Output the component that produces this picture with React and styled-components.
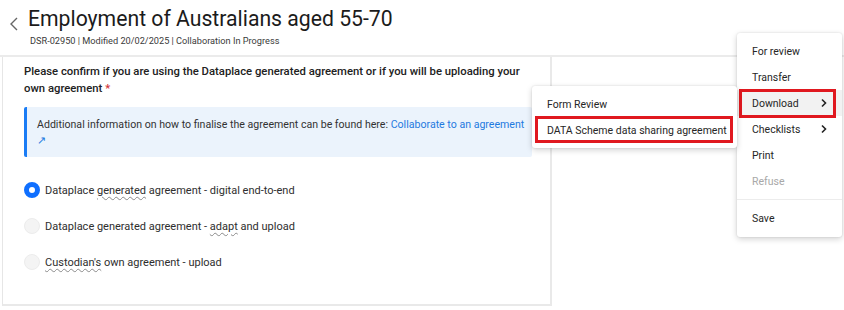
import React from "react";
import styled, { createGlobalStyle } from "styled-components";

const GlobalStyle = createGlobalStyle`
    html, body {
        margin: 0;
        padding: 0;
        background: #ffffff;
        width: 844px;
        height: 310px;
        overflow: hidden;
    }
    body {
        font-family: Roboto, "Open Sans", sans-serif;
        color: #242424;
    }
`;

const Page = styled.div`
    position: relative;
    width: 844px;
    height: 310px;
`;
const Header = styled.div`
    height: 57px;
    border-bottom: 2px solid #ebebeb;
    display: flex;
    align-items: flex-start;
    padding: 4px 0 0 6px;
    box-sizing: border-box;
`;
const BackBtn = styled.div`
    width: 16px;
    height: 28px;
    margin-top: 6px;
    display: flex;
    align-items: center;
    justify-content: center;
`;
const TitleBlock = styled.div`
    margin-left: 6px;
    display: flex;
    flex-direction: column;
`;
const Title = styled.h1`
    margin: 0;
    font-weight: 400;
    font-size: 21.2px;
    line-height: 30px;
    color: #1b1b1b;
`;
const Meta = styled.div`
    margin-left: 2px;
    font-size: 9.2px;
    line-height: 14px;
    color: #3a3a3a;
`;
const Body = styled.div`
    padding-left: 2px;
`;
const Card = styled.div`
    width: 550px;
    height: 249px;
    box-sizing: border-box;
    border-left: 1px solid #e6e6e6;
    border-right: 2px solid #e9e9e9;
    border-bottom: 2px solid #e9e9e9;
    padding: 6px 20px 0 21px;
`;
const Question = styled.p`
    margin: 0;
    font-size: 11.3px;
    font-weight: 500;
    line-height: 17px;
    color: #212121;
`;
const Required = styled.span`
    color: #d13438;
`;
const InfoBox = styled.div`
    margin-top: 10px;
    width: 508px;
    height: 50px;
    box-sizing: border-box;
    background: #ebf3fc;
    border-left: 3px solid #1a7cf5;
    border-radius: 2px;
    padding: 10px 0 0 10px;
    font-size: 10.6px;
    line-height: 16px;
    color: #323232;
`;
const Link = styled.a`
    color: #1f7ae0;
    text-decoration: none;
`;
const Options = styled.div`
    margin-top: 24px;
    display: flex;
    flex-direction: column;
    gap: 18px;
`;
const Option = styled.label`
    display: flex;
    align-items: center;
    height: 18px;
    font-size: 11px;
    color: #2e2e2e;
`;
const Radio = styled.span`
    width: 16px;
    height: 16px;
    border-radius: 50%;
    box-sizing: border-box;
    margin-right: 5px;
    background: ${p => (p.$checked ? "#ffffff" : "#f4f4f4")};
    border: ${p => (p.$checked ? "5px solid #0f6fff" : "1px solid #ececec")};
`;
const Spell = styled.span`
    text-decoration: underline wavy #8a8a8a;
    text-decoration-thickness: 1px;
    text-underline-offset: 2px;
`;
const Menu = styled.div`
    position: absolute;
    background: #ffffff;
    box-shadow: 0 2px 6px rgba(0, 0, 0, 0.18), 0 0 2px rgba(0, 0, 0, 0.12);
    border-radius: 3px;
    padding: 5px 0;
    box-sizing: border-box;
    display: flex;
    flex-direction: column;
`;
const MainMenu = styled(Menu)`
    left: 737px;
    top: 33px;
    width: 105px;
    height: 204px;
`;
const SubMenu = styled(Menu)`
    left: 532px;
    top: 86px;
    width: 205px;
    height: 62px;
`;
const Item = styled.div`
    position: relative;
    height: 26px;
    display: flex;
    align-items: center;
    justify-content: space-between;
    padding: 0 14px 0 15px;
    font-size: 10.5px;
    white-space: nowrap;
    color: ${p => (p.$disabled ? "#a8a8a8" : "#262626")};
    background: ${p => (p.$active ? "#f2f2f2" : "transparent")};
    box-sizing: border-box;
`;
const Highlight = styled.div`
    position: absolute;
    inset: ${p => p.$inset || "0"};
    border: 3px solid #e0181f;
    pointer-events: none;
`;
const Divider = styled.div`
    height: 1px;
    background: #ececec;
    margin: 5px 0 5px;
`;

function Chevron() {
    return (
        <svg width="8" height="10" viewBox="0 0 8 10">
            <path d="M2 1.5 L5.5 5 L2 8.5" fill="none" stroke="#222" strokeWidth="1.6" />
        </svg>
    );
}

export default function App() {
    return (
        <Page>
            <GlobalStyle />
            <Header>
                <BackBtn>
                    <svg width="10" height="16" viewBox="0 0 10 16">
                        <path d="M8 2 L2 8 L8 14" fill="none" stroke="#666" strokeWidth="1.4" />
                    </svg>
                </BackBtn>
                <TitleBlock>
                    <Title>Employment of Australians aged 55-70</Title>
                    <Meta>DSR-02950 | Modified 20/02/2025 | Collaboration In Progress</Meta>
                </TitleBlock>
            </Header>
            <Body>
                <Card>
                    <Question>
                        Please confirm if you are using the Dataplace generated agreement or if you will be uploading your
                        own agreement <Required>*</Required>
                    </Question>
                    <InfoBox>
                        Additional information on how to finalise the agreement can be found here:{" "}
                        <Link>Collaborate to an agreement ↗</Link>
                    </InfoBox>
                    <Options>
                        <Option>
                            <Radio $checked />
                            <span>Dataplace <Spell>generated</Spell> agreement - digital end-to-end</span>
                        </Option>
                        <Option>
                            <Radio />
                            <span>Dataplace generated agreement - <Spell>adapt</Spell> and upload</span>
                        </Option>
                        <Option>
                            <Radio />
                            <span><Spell>Custodian's</Spell> own agreement - upload</span>
                        </Option>
                    </Options>
                </Card>
            </Body>
            <MainMenu>
                <Item>For review</Item>
                <Item>Transfer</Item>
                <Item $active>
                    Download <Chevron />
                    <Highlight $inset="-1px 6px -2px 2px" />
                </Item>
                <Item>Checklists <Chevron /></Item>
                <Item>Print</Item>
                <Item $disabled>Refuse</Item>
                <Divider />
                <Item>Save</Item>
            </MainMenu>
            <SubMenu>
                <Item>Form Review</Item>
                <Item>
                    DATA Scheme data sharing agreement
                    <Highlight $inset="-1px 4px 0 3px" />
                </Item>
            </SubMenu>
        </Page>
    );
}
